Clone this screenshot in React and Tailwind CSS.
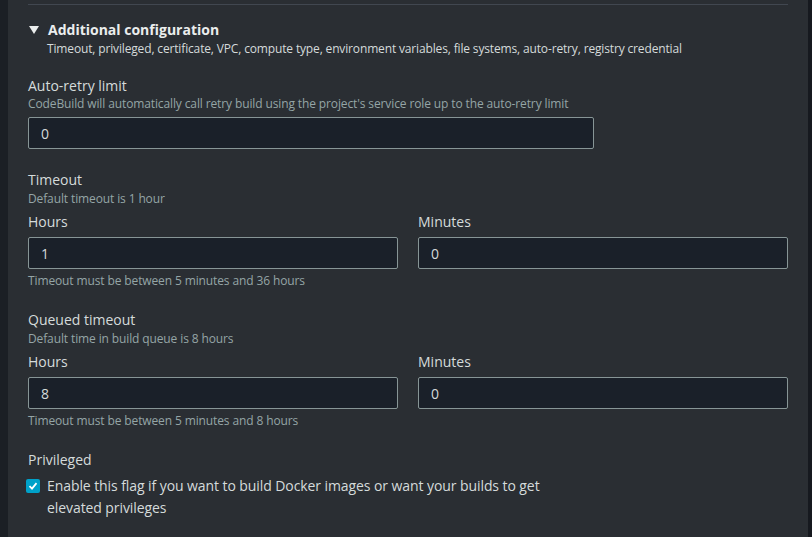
import React from 'react';

const font = { fontFamily: '"Open Sans", "Noto Sans", sans-serif' };

function Label({ children, className = '' }) {
  return <div className={`text-[14px] leading-[20px] text-[#d5dbdb] ${className}`}>{children}</div>;
}

function Hint({ children, className = '' }) {
  return <div className={`text-[12px] leading-[16px] tracking-[-0.12px] text-[#95a5a6] ${className}`}>{children}</div>;
}

function Field({ value, className = '' }) {
  return (
    <input
      readOnly
      value={value}
      className={`block h-[32px] rounded-[2px] border border-[#879596] bg-[#1a2029] px-3 text-[14px] text-[#d5dbdb] outline-none ${className}`}
      style={font}
    />
  );
}

function TimePair({ title, hint, hours, constraint }) {
  return (
    <div className="mt-[21px]">
      <Label>{title}</Label>
      <Hint className="pt-px">{hint}</Hint>
      <div className="mt-[5px] grid grid-cols-2 gap-5">
        <div>
          <Label>Hours</Label>
          <Field value={hours} className="mt-[5px] w-full" />
        </div>
        <div>
          <Label>Minutes</Label>
          <Field value="0" className="mt-[5px] w-full" />
        </div>
      </div>
      <Hint className="mt-[4px]">{constraint}</Hint>
    </div>
  );
}

export default function App() {
  return (
    <div className="flex h-[537px] w-[812px] overflow-hidden bg-[#16191f]" style={font}>
      <div className="w-2 bg-[#1b1f25]" />
      <div className="flex-1 bg-[#2a2e33] px-5">
        <div className="mt-1 h-px bg-[#414750]" />

        <div className="mt-[15px]">
          <div className="flex items-center gap-[9px] text-[14px] font-bold leading-[20px] text-[#eaeded]">
            <svg width="10" height="8" viewBox="0 0 10 8" className="ml-px">
              <path d="M0 0 L10 0 L5 8 Z" fill="#eaeded" />
            </svg>
            Additional configuration
          </div>
          <div className="pl-[19px] text-[12px] leading-[18px] tracking-[-0.15px] text-[#d5dbdb]">
            Timeout, privileged, certificate, VPC, compute type, environment variables, file systems, auto-retry, registry credential
          </div>
        </div>

        <div className="mt-[18px]">
          <Label>Auto-retry limit</Label>
          <Hint>CodeBuild will automatically call retry build using the project's service role up to the auto-retry limit</Hint>
          <Field value="0" className="mt-[5px] w-[566px]" />
        </div>

        <TimePair
          title="Timeout"
          hint="Default timeout is 1 hour"
          hours="1"
          constraint="Timeout must be between 5 minutes and 36 hours"
        />

        <TimePair
          title="Queued timeout"
          hint="Default time in build queue is 8 hours"
          hours="8"
          constraint="Timeout must be between 5 minutes and 8 hours"
        />

        <div className="mt-[21px]">
          <Label>Privileged</Label>
          <label className="-ml-[2px] mt-[5px] flex items-start gap-[7px]">
            <span className="mt-[4px] flex h-[14px] w-[14px] shrink-0 items-center justify-center rounded-[2px] bg-[#00a1c9]">
              <svg width="10" height="10" viewBox="0 0 10 10">
                <path d="M1.5 5.2 L4 7.6 L8.5 2.2" fill="none" stroke="#fff" strokeWidth="1.8" />
              </svg>
            </span>
            <span className="w-[500px] text-[14px] leading-[22px] tracking-[-0.08px] text-[#d5dbdb]">
              Enable this flag if you want to build Docker images or want your builds to get elevated privileges
            </span>
          </label>
        </div>
      </div>
      <div className="w-1 bg-[#16191f]" />
    </div>
  );
}
